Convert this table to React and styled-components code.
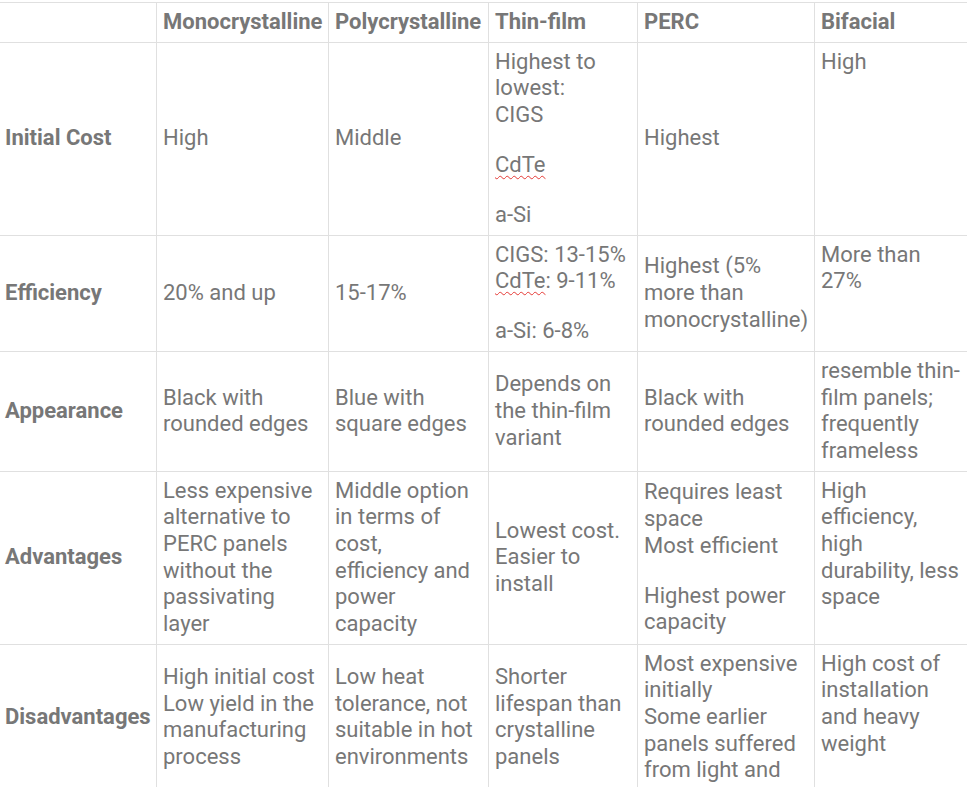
import React from "react";
import styled, { createGlobalStyle, css } from "styled-components";

const Global = createGlobalStyle`
  html, body {
    margin: 0;
    padding: 0;
    background: #fff;
    overflow: hidden;
  }
  body {
    font-family: Roboto, "Liberation Sans", sans-serif;
    color: #777;
  }
`

const Wrap = styled.div`
  padding-top: 2px;
  margin-left: -2px;
`

const Table = styled.table`
  border-collapse: collapse;
  table-layout: fixed;
  width: 971px;
  font-size: 22px;
  line-height: 26.67px;
`

const HeadCell = styled.th`
  border: 1px solid #e0e0e0;
  padding: 6px;
  font-weight: 700;
  text-align: left;
  vertical-align: middle;
  white-space: nowrap;
`

const RowLabel = styled.th`
  border: 1px solid #e0e0e0;
  padding: 6px;
  font-weight: 700;
  text-align: left;
  vertical-align: middle;
`

const topAligned = css`
  vertical-align: top;
`

const Cell = styled.td`
  border: 1px solid #e0e0e0;
  padding: 6px 8px 6px 6px;
  font-weight: 400;
  vertical-align: middle;
  ${props => props.$top && topAligned};
`

const Gap = styled.div`
  height: 23.3px;
`

// spell-check squiggle like the one the editor draws
const Typo = styled.span`
  text-decoration: underline wavy #e53935;
  text-decoration-thickness: 1px;
  text-underline-offset: 3px;
`

const widths = [158, 172, 160, 149, 177, 155];

const heads = ["", "Monocrystalline", "Polycrystalline", "Thin-film", "PERC", "Bifacial"];

const rows = [
  {
    label: "Initial Cost",
    cells: [
      "High",
      "Middle",
      <>Highest to lowest:<br />CIGS<Gap /><Typo>CdTe</Typo><Gap />a-Si</>,
      "Highest",
      "High",
    ],
  },
  {
    label: "Efficiency",
    cells: [
      "20% and up",
      "15-17%",
      <>CIGS: 13-15%<br /><Typo>CdTe</Typo>: 9-11%<Gap />a-Si: 6-8%</>,
      "Highest (5% more than monocrystalline)",
      "More than 27%",
    ],
  },
  {
    label: "Appearance",
    cells: [
      "Black with rounded edges",
      "Blue with square edges",
      "Depends on the thin-film variant",
      "Black with rounded edges",
      "resemble thin-film panels; frequently frameless",
    ],
  },
  {
    label: "Advantages",
    cells: [
      "Less expensive alternative to PERC panels without the passivating layer",
      "Middle option in terms of cost, efficiency and power capacity",
      "Lowest cost. Easier to install",
      <>Requires least space<br />Most efficient<Gap />Highest power capacity</>,
      "High efficiency, high durability, less space",
    ],
  },
  {
    label: "Disadvantages",
    cells: [
      <>High initial cost<br />Low yield in the manufacturing process</>,
      "Low heat tolerance, not suitable in hot environments",
      "Shorter lifespan than crystalline panels",
      <>Most expensive initially<br />Some earlier panels suffered from light and</>,
      "High cost of installation and heavy weight",
    ],
  },
];

const App = () => {
  return (
    <Wrap>
      <Global />
      <Table>
        <colgroup>
          {widths.map((w, i) => (
            <col key={i} style={{ width: w }} />
          ))}
        </colgroup>
        <thead>
          <tr>
            {heads.map((h, i) => (
              <HeadCell key={i}>{h}</HeadCell>
            ))}
          </tr>
        </thead>
        <tbody>
          {rows.map(row => (
            <tr key={row.label}>
              <RowLabel>{row.label}</RowLabel>
              {row.cells.map((c, i) => (
                <Cell key={i} $top={i === 4}>{c}</Cell>
              ))}
            </tr>
          ))}
        </tbody>
      </Table>
    </Wrap>
  );
};

export default App;
